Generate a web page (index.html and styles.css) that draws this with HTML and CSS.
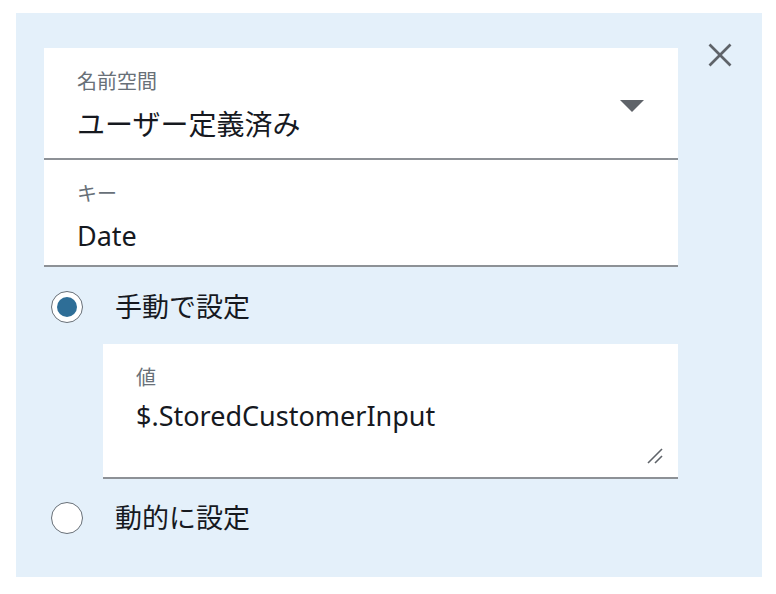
FILE: index.html
```html
<!DOCTYPE html>
<html>
<head>
    <title>属性の設定</title>
    <link rel="stylesheet" href="styles.css">
</head>
<body>
    <div class="panel">
        <div class="panel-body">
            <div class="field field-select">
                <div class="field-main">
                    <div class="field-label">名前空間</div>
                    <div class="field-value select-text">ユーザー定義済み</div>
                </div>
                <span class="caret"></span>
            </div>

            <div class="field field-key">
                <div class="field-label">キー</div>
                <div class="field-value">Date</div>
            </div>

            <label class="radio-row">
                <span class="radio checked"></span>
                <span class="radio-text">手動で設定</span>
            </label>

            <div class="field field-text">
                <div class="field-label">値</div>
                <div class="field-value value-text">$.StoredCustomerInput</div>
                <svg class="resize" width="16" height="16" viewBox="0 0 16 16">
                    <line x1="1" y1="15" x2="15" y2="1" />
                    <line x1="8" y1="15" x2="15" y2="8" />
                </svg>
            </div>

            <label class="radio-row radio-row-last">
                <span class="radio"></span>
                <span class="radio-text">動的に設定</span>
            </label>
        </div>

        <button class="close" aria-label="閉じる">
            <svg width="24" height="24" viewBox="0 0 24 24">
                <line x1="1.5" y1="1.5" x2="22.5" y2="22.5" />
                <line x1="22.5" y1="1.5" x2="1.5" y2="22.5" />
            </svg>
        </button>
    </div>
</body>
</html>
```

FILE: styles.css
```css
body {
    margin: 0;
    background: #ffffff;
    font-family: "Noto Sans", "Noto Sans CJK JP", sans-serif;
    color: #16191f;
}

.panel {
    margin: 13px 0 0 16px;
    width: 746px;
    height: 564px;
    box-sizing: border-box;
    padding: 35px 30px 0 28px;
    background: #e4f0fa;
    display: flex;
    gap: 30px;
}

.panel-body {
    width: 634px;
    display: flex;
    flex-direction: column;
}

/* Fields */
.field {
    background: #ffffff;
    border-bottom: 2px solid #8d9196;
    padding: 20px 34px 14px 33px;
}

.field-select {
    display: flex;
    align-items: center;
}

.field-main {
    flex: 1;
}

.field-key {
    padding-bottom: 9px;
}

.field-label {
    font-size: 20px;
    line-height: 28px;
    color: #687078;
}

.field-value {
    font-size: 27px;
    line-height: 40px;
    margin-top: 8px;
}

.select-text {
    font-size: 28px;
}

.caret {
    width: 0;
    height: 0;
    border-left: 12px solid transparent;
    border-right: 12px solid transparent;
    border-top: 12px solid #5f6369;
}

.field-text {
    position: relative;
    margin-left: 59px;
    padding-bottom: 41px;
}

.value-text {
    margin-top: 4px;
}

.resize {
    position: absolute;
    right: 15px;
    bottom: 13px;
}

.resize line {
    stroke: #5f6369;
    stroke-width: 1.6;
}

/* Radios */
.radio-row {
    display: flex;
    align-items: center;
    gap: 32px;
    padding: 24px 0 21px 7px;
    cursor: pointer;
}

.radio-row-last {
    padding-top: 23px;
}

.radio {
    width: 32px;
    height: 32px;
    box-sizing: border-box;
    border-radius: 50%;
    border: 1px solid #687078;
    background: #ffffff;
    display: flex;
    align-items: center;
    justify-content: center;
}

.radio.checked::after {
    content: "";
    width: 20px;
    height: 20px;
    border-radius: 50%;
    background: #2e6e97;
}

.radio-text {
    font-size: 27px;
    line-height: 32px;
}

/* Close */
.close {
    margin-top: -5px;
    width: 24px;
    height: 24px;
    padding: 0;
    border: none;
    background: none;
    cursor: pointer;
}

.close line {
    stroke: #5f6369;
    stroke-width: 2.6;
}
```
